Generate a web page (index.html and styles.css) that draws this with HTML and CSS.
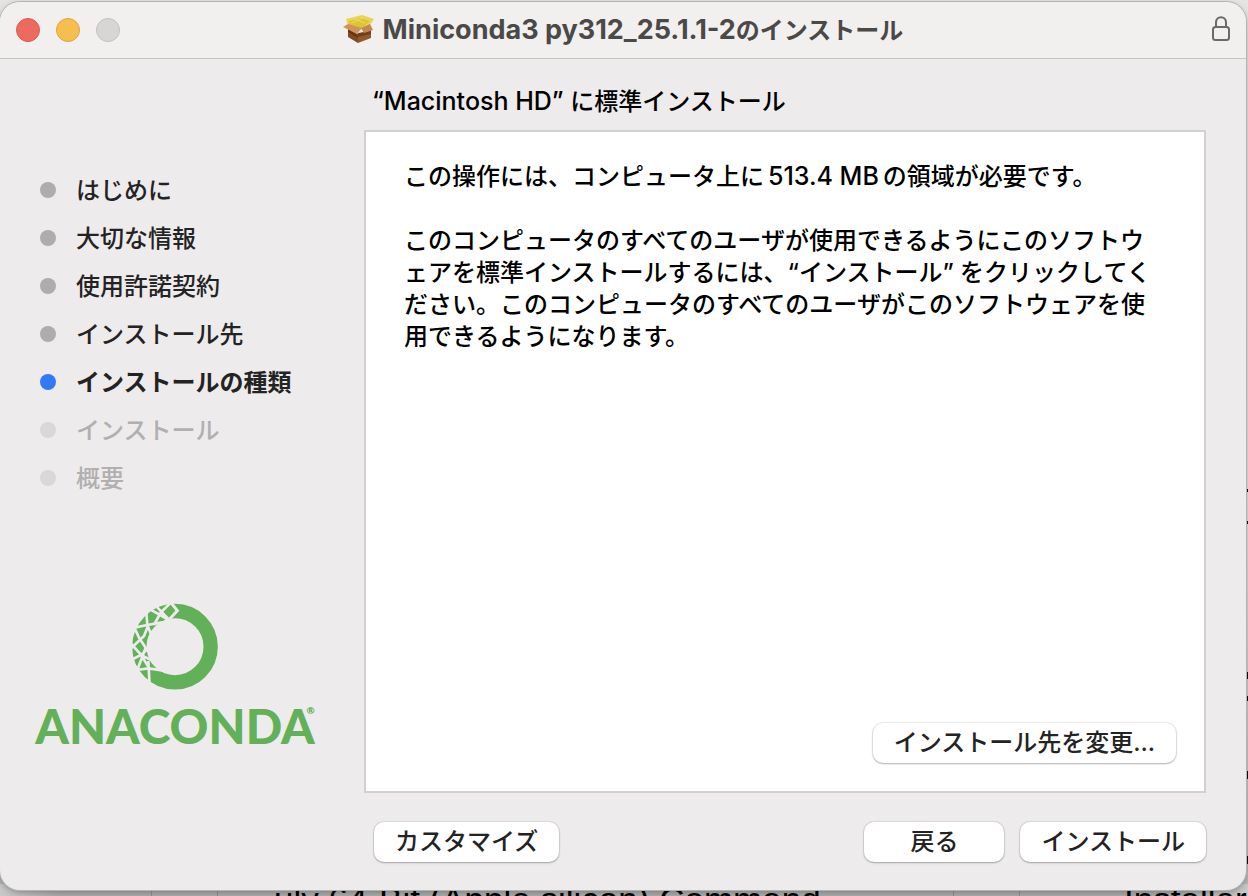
FILE: index.html
```
<!DOCTYPE html>
<html lang="ja">
<head>
    <meta charset="UTF-8">
    <meta name="viewport" content="width=device-width, initial-scale=1.0">
    <title>Miniconda3 py312_25.1.1-2のインストール</title>
    <link rel="stylesheet" href="styles.css">
</head>
<body>
    <!-- Page showing behind the window -->
    <div class="backdrop" aria-hidden="true">
        <svg class="backdrop-edge" width="2" height="400" viewBox="0 0 2 400">
            <path d="M0 9h2v3H0zM0 41h2v3H0zM0 192h2v7H0zM0 216h2v5H0zM0 288h1v5H0zM1 291h1v8H1zM0 298h1v5H0zM0 376h2v8H0z" fill="#111"/>
        </svg>
        <div class="backdrop-row">
            <span class="cell"></span>
            <span class="cell cell-check"></span>
            <span class="cell cell-name">uly 64-Bit (Apple silicon) Command</span>
            <span class="cell cell-check"></span>
            <span class="cell cell-type">Installer</span>
        </div>
    </div>

    <div class="window">
        <header class="titlebar">
            <div class="lights">
                <button class="light close" aria-label="閉じる"></button>
                <button class="light minimize" aria-label="しまう"></button>
                <button class="light zoom" aria-label="拡大" disabled></button>
            </div>
            <h1 class="title">
                <svg class="package" width="32" height="30" viewBox="0 0 32 30">
                    <path d="M5 13L15 19V28L5 22z" fill="#80491e"/>
                    <path d="M15 19L28 15V23L15 28z" fill="#93592a"/>
                    <path d="M5 14L14 20L15 23L5 17z" fill="#623512"/>
                    <path d="M15 18L28 16V19L15 22z" fill="#704019"/>
                    <path d="M3 4L19 0L31 4L27 10L19 14L5 11z" fill="#edd257"/>
                    <path d="M6 6L17 3L27 6L18 14L6 10z" fill="#dcc62f"/>
                    <path d="M11 4L22 8M8 8L20 3" stroke="#eddc62" stroke-width="1" fill="none"/>
                    <path d="M5 9L19 13L14 19L0 12z" fill="#d0925c"/>
                    <path d="M18 13L27 9L30 15L21 18z" fill="#c58752"/>
                </svg>
                <span>Miniconda3 py312_25.1.1-2<span class="title-ja">のインストール</span></span>
            </h1>
            <svg class="lock" width="20" height="28" viewBox="0 0 20 28" fill="none" stroke="#6b6a69" stroke-width="2">
                <rect x="3" y="11" width="16" height="13" rx="2.5"/>
                <path d="M6 11V6.500C6 -0.500 16 -0.500 16 6.500V11"/>
            </svg>
        </header>

        <div class="main">
            <aside class="sidebar">
                <ol class="steps">
                    <li>はじめに</li>
                    <li>大切な情報</li>
                    <li>使用許諾契約</li>
                    <li>インストール先</li>
                    <li class="current">インストールの種類</li>
                    <li class="pending">インストール</li>
                    <li class="pending">概要</li>
                </ol>
                <div class="brand">
                    <svg class="snake" width="88" height="88" viewBox="0 0 264 264">
                        <circle cx="132" cy="131" r="107" fill="none" stroke="#62b058" stroke-width="43"/>
                        <g fill="none" stroke="#edebec" stroke-width="8">
                            <path d="M119 -2L139 23L116 48" stroke-width="9"/>
                            <path d="M118 0L89 29L69 66M74 8L93 28L112 48M58 20L88 36L114 52"/>
                            <path d="M46 30L49 66L60 94M14 73L49 66L94 58M53 64L39 99L-2 138M10 74L24 104L46 137"/>
                            <path d="M-2 120L29 154L55 196M44 134L20 198M-2 172L30 156L50 138M30 156L62 172M52 174L56 250M16 201L53 196L98 203"/>
                        </g>
                    </svg>
                    <div class="brand-name">ANACONDA<sup>®</sup></div>
                </div>
            </aside>

            <main class="content">
                <h2 class="heading"><span class="latin">“Macintosh HD” </span>に標準インストール</h2>
                <section class="panel">
                    <p>この操作には、コンピュータ上に<span class="size">513.4 MB</span>の領域が必要です。</p>
                    <p>このコンピュータのすべてのユーザが使用できるようにこのソフトウェアを標準インストールするには、“インストール” をクリックしてください。このコンピュータのすべてのユーザがこのソフトウェアを使用できるようになります。</p>
                    <button class="btn change">インストール先を変更...</button>
                </section>
                <footer class="actions">
                    <button class="btn customize">カスタマイズ</button>
                    <button class="btn back">戻る</button>
                    <button class="btn">インストール</button>
                </footer>
            </main>
        </div>
    </div>
</body>
</html>
```
FILE: styles.css
```
* {
    box-sizing: border-box;
}

body {
    font-family: Inter, "Noto Sans CJK JP", sans-serif;
    font-size: 24px;
    font-weight: 500;
    line-height: 32px;
    color: #000;
    margin: 0;
    min-height: 100vh;
    padding: 2px 2px 6px 0;
    display: flex;
    position: relative;
    background: linear-gradient(#e4e4e4, #dcdcdc 60%, #b4b4b4);
}

.backdrop {
    position: absolute;
    inset: 0;
    overflow: hidden;
}

.backdrop-edge {
    position: absolute;
    top: 480px;
    right: 0;
}

.backdrop-row {
    position: absolute;
    left: 0;
    right: 0;
    bottom: 0;
    height: 12px;
    display: flex;
    font-family: "Liberation Sans", sans-serif;
    font-size: 35px;
    font-weight: 400;
    line-height: 32px;
    white-space: nowrap;
    background: linear-gradient(90deg, #c8c8c8, #aaa 60px, #aaa 1180px, #c8c8c8);
}

.cell {
    width: 152px;
    border-right: 1px solid #8e8e8e;
}

.cell-check {
    width: 66px;
}

.cell-name {
    flex: 1;
    padding-left: 56px;
}

.cell-type {
    width: 228px;
    padding-left: 104px;
    border: 0;
}

.window {
    position: relative;
    flex: 1;
    display: flex;
    flex-direction: column;
    background: #edebec;
    border-radius: 20px;
    box-shadow: 0 0 0 1px #b4b4b4, 0 2px 6px rgba(0, 0, 0, 0.3);
    overflow: hidden;
}

.titlebar {
    display: grid;
    grid-template-columns: 1fr auto 1fr;
    align-items: center;
    height: 57px;
    padding: 0 16px;
    background: #f1f0ee;
    border-bottom: 1px solid #c6c5c5;
}

.lights {
    display: flex;
    gap: 16px;
}

.light {
    width: 24px;
    height: 24px;
    padding: 0;
    border: 1px solid #d95a50;
    border-radius: 50%;
    background: #ed6a5f;
}

.light.minimize {
    border-color: #dca43c;
    background: #f5bf4f;
}

.light.zoom {
    border-color: #c2c1c0;
    background: #d7d6d4;
}

.title {
    display: flex;
    align-items: center;
    gap: 8px;
    margin: 0;
    font-size: 27px;
    font-weight: 700;
    color: #4a4948;
}

.title-ja {
    font-size: 24px;
}

.lock {
    justify-self: end;
}

.main {
    flex: 1;
    display: grid;
    grid-template-columns: 364px 1fr;
}

.sidebar {
    padding: 108px 0 0 34px;
}

.steps {
    list-style: none;
    margin: 0;
    padding: 0 0 0 6px;
    color: #242324;
}

.steps li {
    display: flex;
    align-items: center;
    gap: 20px;
    height: 48px;
}

.steps li::before {
    content: "";
    width: 16px;
    height: 16px;
    margin-bottom: 2px;
    border-radius: 50%;
    background: #aeacad;
}

.steps .current {
    font-weight: 700;
}

.steps .current::before {
    background: #3478f6;
}

.steps .pending {
    color: #b1afb0;
}

.steps .pending::before {
    background: #d9d7d8;
}

.brand {
    display: flex;
    flex-direction: column;
    align-items: center;
    width: 282px;
    margin-top: 100px;
    color: #62b058;
}

.brand-name {
    position: relative;
    margin-top: 7px;
    font-family: Lato, sans-serif;
    font-size: 48px;
    font-weight: 900;
    line-height: 56px;
}

.brand-name sup {
    position: absolute;
    top: 0;
    right: 0;
    font-size: 10px;
    line-height: 24px;
}

.content {
    display: flex;
    flex-direction: column;
    padding: 26px 40px 28px 0;
}

.heading {
    margin: 0 0 12px 8px;
    font-size: 24px;
    font-weight: 500;
}

.latin {
    font-size: 25px;
}

.size {
    margin: 0 4px;
    font-size: 25px;
}

.panel {
    flex: 1;
    display: flex;
    flex-direction: column;
    padding: 28px 46px 28px 38px;
    background: #fff;
    border: 2px solid #d2d1d2;
    line-break: loose;
}

.panel p {
    margin: 0 0 32px;
}

.btn {
    height: 40px;
    padding: 0 21px;
    border: 0;
    border-radius: 10px;
    background: #fff;
    box-shadow: 0 0 1px 1px rgba(0, 0, 0, 0.08), 0 1px 2px rgba(0, 0, 0, 0.25);
    font: inherit;
    color: #242324;
}

.change {
    align-self: flex-end;
    margin-top: auto;
    margin-right: -18px;
}

.actions {
    display: flex;
    gap: 16px;
    margin-top: 29px;
    padding-left: 10px;
}

.customize {
    margin-right: auto;
}

.back {
    width: 140px;
}
```
